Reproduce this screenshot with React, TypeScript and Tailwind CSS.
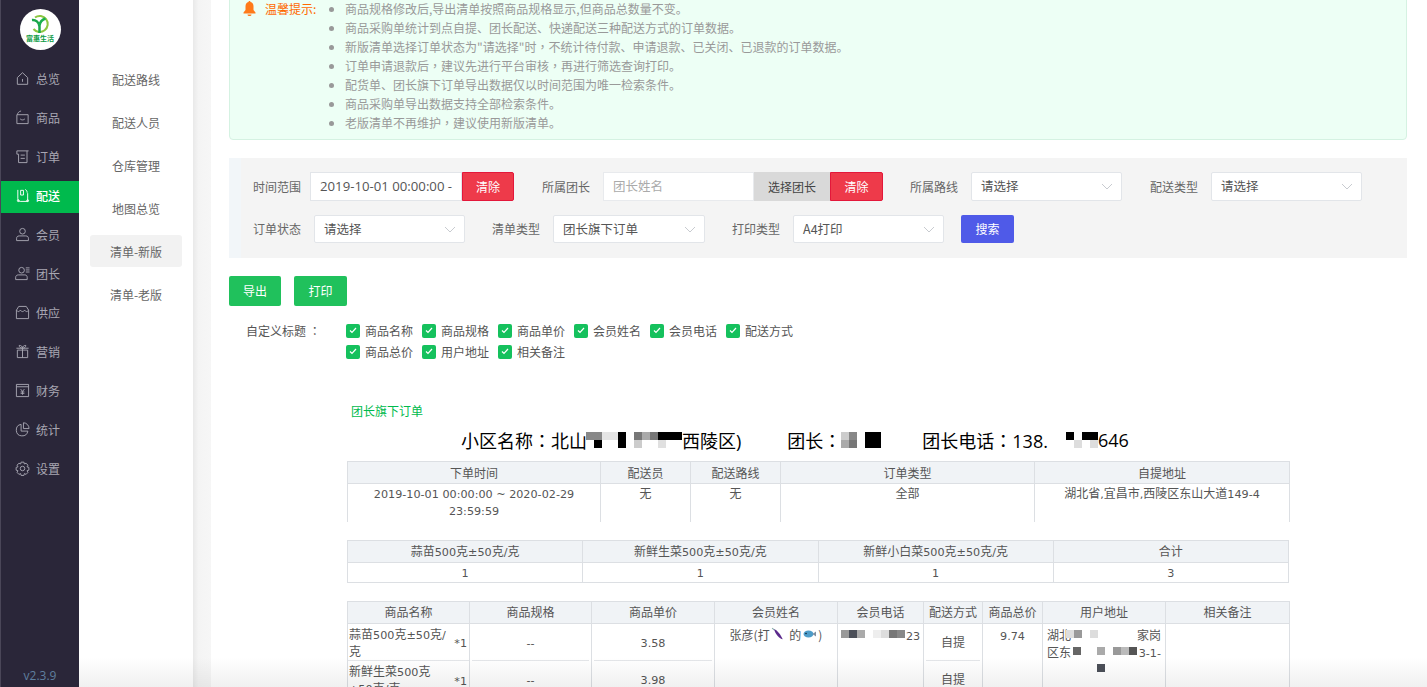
import React from "react";

const FONT = "font-['Noto_Sans_CJK_SC','Open_Sans',sans-serif]";

function NavIcon({ name }: { name: string }) {
  const paths: Record<string, React.ReactNode> = {
    home: (
      <>
        <path d="M2.500 7 8 1.800 13.500 7v7.200h-11z" />
        <path d="M8 8.500v3" />
      </>
    ),
    goods: (
      <>
        <path d="M2 5h12v9.500H2z" />
        <path d="M2.500 5c.3-2 1.800-3.500 4-4" />
        <path d="M5.500 9.500c1.200 1.400 3.800 1.400 5 0" />
      </>
    ),
    order: (
      <>
        <path d="M2 2h12.500M2 2v3.500h1.800V14.500h9V2" />
        <path d="M6 6.500h4.500M6 10h4.500" />
      </>
    ),
    ship: (
      <>
        <path d="M3 2v9.500c0 1.500 1 2.800 2.500 2.800h8V5.500" />
        <path d="M6 2.500h3v5H6zM11 1.500c1.200.8 2 2 2 3.500" />
        <circle cx="3.500" cy="13.500" r="1" />
        <circle cx="13.500" cy="13.500" r="1" />
      </>
    ),
    user: (
      <>
        <circle cx="8" cy="4.500" r="3" />
        <path d="M4.500 9.500h7c2 0 2.800 1.300 2.800 2.500v2.500H1.700V12c0-1.200.8-2.500 2.800-2.500z" />
      </>
    ),
    team: (
      <>
        <circle cx="7" cy="4.500" r="3" />
        <path d="M3.500 9.500h7c1.800 0 2.500 1.300 2.500 2.500v2.500H.7V12c0-1.200 1-2.500 2.800-2.500z" />
        <path d="M11.500 2h4M11.500 4.200h4M11.500 6.400h4" />
      </>
    ),
    store: (
      <>
        <path d="M4 1.500h8l2.500 4v9h-13v-9z" />
        <path d="M1.500 5.500c1.500 2 3 2 4.200 0 1.300 2 3.300 2 4.600 0 1.200 2 2.700 2 4.200 0" />
      </>
    ),
    gift: (
      <>
        <path d="M2.500 6.500h11v8h-11zM1.500 4.500h13M8 4.500v10" />
        <path d="M8 4.500C6 4.500 4.500 3.500 4.500 1.500 6.500 1.500 8 2.500 8 4.500c0-2 1.500-3 3.500-3 0 2-1.500 3-3.500 3z" />
      </>
    ),
    money: (
      <>
        <path d="M1.500 1.500h13v13h-13zM1.500 4h13" />
        <path d="m6 6.500 2 2.500 2-2.500M8 9v3.500M6 9.500h4M6 11h4" />
      </>
    ),
    chart: (
      <>
        <path d="M6.500 2.500a6.200 6.200 0 1 0 7.200 7.200H6.500z" />
        <path d="M9 .8a6.200 6.200 0 0 1 6 6.200H9z" />
      </>
    ),
    gear: (
      <>
        <path d="m6.500 1.200h3l.5 2 1.800-.9 2 2.200-1 1.700 2 .6v3l-2 .6 1 1.700-2 2.200-1.800-.9-.5 2h-3l-.5-2-1.800.9-2-2.200 1-1.700-2-.6v-3l2-.6-1-1.700 2-2.200 1.800.9z" />
        <circle cx="8" cy="8" r="2.400" />
      </>
    ),
  };
  return (
    <svg width="15" height="15" viewBox="0 0 16 16" fill="none" stroke="currentColor" strokeWidth="1" className="shrink-0">
      {paths[name]}
    </svg>
  );
}

function Logo() {
  return (
    <div className="w-[41px] h-[41px] rounded-full bg-white flex flex-col items-center pt-[5px]">
      <svg width="20" height="20" viewBox="0 0 20 20" fill="none">
        <path d="M5 3.500A8 8 0 1 1 3.500 15" stroke="#8cc63f" strokeWidth="2" />
        <path d="M2 6c3.500-.5 7 2 7.500 6.500V19" stroke="#1aa64a" strokeWidth="2.500" />
        <path d="M15.500 4.500c-3 1-5.500 3-6 7" stroke="#19b04f" strokeWidth="2.500" />
      </svg>
      <span className="text-[7px] leading-[8px] font-bold text-[#0c9b45] whitespace-nowrap">富惠生活</span>
    </div>
  );
}

const navItems = [
  ["home", "总览"],
  ["goods", "商品"],
  ["order", "订单"],
  ["ship", "配送"],
  ["user", "会员"],
  ["team", "团长"],
  ["store", "供应"],
  ["gift", "营销"],
  ["money", "财务"],
  ["chart", "统计"],
  ["gear", "设置"],
];

const subItems = ["配送路线", "配送人员", "仓库管理", "地图总览", "清单-新版", "清单-老版"];

const tips = [
  "商品规格修改后,导出清单按照商品规格显示,但商品总数量不变。",
  "商品采购单统计到点自提、团长配送、快递配送三种配送方式的订单数据。",
  "新版清单选择订单状态为\"请选择\"时，不统计待付款、申请退款、已关闭、已退款的订单数据。",
  "订单申请退款后，建议先进行平台审核，再进行筛选查询打印。",
  "配货单、团长旗下订单导出数据仅以时间范围为唯一检索条件。",
  "商品采购单导出数据支持全部检索条件。",
  "老版清单不再维护，建议使用新版清单。",
];

// fullwidth comma and colon sit centred in the picture, as in the TC font
function Punct({ text }: { text: string }) {
  return (
    <>
      {text.split(/([，：])/).map((part, i) =>
        i % 2 ? (
          <span key={i} className="font-['Noto_Sans_CJK_TC']">{part}</span>
        ) : (
          part
        ),
      )}
    </>
  );
}

// latin runs in the tables are a wider face than the CJK around them
function Mix({ text }: { text: string }) {
  return (
    <>
      {text.split(/([0-9A-Za-z±.:~\-\/*,() ]+)/).map((part, i) =>
        i % 2 ? (
          <span key={i} className="font-['DejaVu_Sans'] text-[11.2px] leading-none">{part}</span>
        ) : (
          part
        ),
      )}
    </>
  );
}

function Sidebar() {
  return (
    <aside className="w-[79px] h-full shrink-0 bg-[#2a2639] border-l border-[#4a4658] flex flex-col items-center">
      <div className="pt-[9px] pb-[10px]">
        <Logo />
      </div>
      <nav className="w-full">
        {navItems.map(([icon, label]) => {
          const active = label === "配送";
          return (
            <div key={label} className="h-[39px] flex items-center">
              <div className={`w-full h-8 pb-[2px] flex items-center pl-[14px] gap-[6px] text-xs ${active ? "bg-[#00ba4d] text-white font-medium" : "text-[#a8a6b2]"}`}>
                <NavIcon name={icon} />
                <span>{label}</span>
              </div>
            </div>
          );
        })}
      </nav>
      <div className="mt-auto pb-[3px] text-xs font-['Open_Sans'] text-[#5f7f9f]">v2.3.9</div>
    </aside>
  );
}

function SubNav() {
  return (
    <div className="w-[114px] h-full shrink-0 bg-white pt-[63px] pl-[11px] pr-[11px] flex flex-col gap-[11px]">
      {subItems.map((item) => (
        <div key={item} className={`h-8 pt-[2px] flex items-center justify-center text-xs text-[#666] rounded-[3px] ${item === "清单-新版" ? "bg-[#f2f2f2]" : ""}`}>
          {item}
        </div>
      ))}
    </div>
  );
}

function Chevron() {
  return (
    <svg width="12" height="7" viewBox="0 0 12 7" fill="none" stroke="#c8cbd0" strokeWidth="1">
      <path d="m1 1 5 5 5-5" />
    </svg>
  );
}

function Select({ value, className }: { value: string; className: string }) {
  return (
    <div className={`h-full bg-white border border-[#e2e5e9] rounded-[2px] flex items-center justify-between pl-[9px] pr-[8px] text-[12.5px] text-[#555] ${className}`}>
      <span>{value}</span>
      <Chevron />
    </div>
  );
}

function ClearBtn({ className }: { className: string }) {
  return (
    <div className={`h-full shrink-0 bg-[#ee3a4a] border border-[#e3173a] rounded-r-[2px] flex items-center justify-center text-xs text-white ${className}`}>
      清除
    </div>
  );
}

function Label({ children, className }: { children: string; className: string }) {
  return <span className={`text-xs text-[#666] shrink-0 ${className}`}>{children}</span>;
}

function FilterPanel() {
  return (
    <div className="mt-[18px] h-[100px] bg-[#f2f6f9]">
      <div className="ml-[12px] mt-0 h-full pt-[14px] bg-[#f4f4f4] relative">
        <div className="h-[29px] flex items-center">
          <Label className="ml-[12px]">时间范围</Label>
          <div className="ml-[9px] w-[152px] h-full bg-white border border-[#e2e5e9] flex items-center pl-[9px] text-[13.2px] font-['Open_Sans'] text-[#555] overflow-hidden whitespace-nowrap">
            2019-10-01 00:00:00 -
          </div>
          <ClearBtn className="w-[52px]" />
          <Label className="ml-[28px]">所属团长</Label>
          <div className="ml-[13px] w-[151px] h-full bg-white border border-[#e8eaed] flex items-center pl-[9px] text-[12.5px] text-[#aaa]">团长姓名</div>
          <div className="w-[76px] h-full bg-[#d9d9d9] flex items-center justify-center text-xs text-[#444]">选择团长</div>
          <ClearBtn className="w-[53px]" />
          <Label className="ml-[27px]">所属路线</Label>
          <Select value="请选择" className="ml-[13px] w-[151px]" />
          <Label className="ml-[28px]">配送类型</Label>
          <Select value="请选择" className="ml-[13px] w-[151px]" />
        </div>
        <div className="mt-[14px] h-[28px] flex items-center">
          <Label className="ml-[12px]">订单状态</Label>
          <Select value="请选择" className="ml-[13px] w-[151px]" />
          <Label className="ml-[27px]">清单类型</Label>
          <Select value="团长旗下订单" className="ml-[13px] w-[152px]" />
          <Label className="ml-[27px]">打印类型</Label>
          <Select value="A4打印" className="ml-[13px] w-[151px]" />
          <div className="ml-[17px] w-[53px] h-full bg-[#4f5ae8] rounded-[2px] flex items-center justify-center text-xs text-white">搜索</div>
        </div>
      </div>
    </div>
  );
}

function Check({ label }: { label: string }) {
  return (
    <div className="w-[76px] h-[21px] flex items-center gap-[5px]">
      <span className="w-[14px] h-[14px] rounded-[2px] bg-[#15c15d] flex items-center justify-center shrink-0">
        <svg width="8" height="7" viewBox="0 0 8 7" fill="none" stroke="#fff" strokeWidth="1.200">
          <path d="m1 3.500 2 2 4-4.500" />
        </svg>
      </span>
      <span className="text-xs text-[#555] whitespace-nowrap">{label}</span>
    </div>
  );
}

function Mosaic({ rows, className = "" }: { rows: string[][]; className?: string }) {
  return (
    <span className={`inline-flex flex-col shrink-0 ${className}`}>
      {rows.map((cells, r) => (
        <span key={r} className="flex">
          {cells.map((c, i) => (
            <span key={i} className="w-2 h-2 block" style={{ background: c }} />
          ))}
        </span>
      ))}
    </span>
  );
}

const thCls = "h-[22px] bg-[#f0f3f6] border border-[#dcdfe3] font-normal text-xs text-[#555] p-0 text-center";
const tdCls = "border-x border-b border-[#dcdfe3] text-xs text-[#555] text-center p-0";

function MetaTable() {
  const cols = [253, 90, 90, 254, 255];
  const heads = ["下单时间", "配送员", "配送路线", "订单类型", "自提地址"];
  const row = ["2019-10-01 00:00:00 ~ 2020-02-29 23:59:59", "无", "无", "全部", "湖北省,宜昌市,西陵区东山大道149-4"];
  return (
    <table className="table-fixed border-collapse w-[942px]">
      <colgroup>
        {cols.map((w, i) => (
          <col key={i} style={{ width: w }} />
        ))}
      </colgroup>
      <thead>
        <tr>
          {heads.map((h) => (
            <th key={h} className={thCls}>{h}</th>
          ))}
        </tr>
      </thead>
      <tbody>
        <tr>
          {row.map((c, i) => (
            <td key={i} className="h-[38px] border-x border-[#dcdfe3] text-xs leading-[17px] text-[#555] text-center align-top px-[20px] pt-0">
              <Mix text={c} />
            </td>
          ))}
        </tr>
      </tbody>
    </table>
  );
}

function SumTable() {
  const heads = ["蒜苗500克±50克/克", "新鲜生菜500克±50克/克", "新鲜小白菜500克±50克/克", "合计"];
  const row = ["1", "1", "1", "3"];
  return (
    <table className="table-fixed border-collapse w-[942px] mt-[18px]">
      <thead>
        <tr>
          {heads.map((h) => (
            <th key={h} className={thCls}><Mix text={h} /></th>
          ))}
        </tr>
      </thead>
      <tbody>
        <tr>
          {row.map((c, i) => (
            <td key={i} className={`${tdCls} h-[20px]`}><Mix text={c} /></td>
          ))}
        </tr>
      </tbody>
    </table>
  );
}

function Stack({ items }: { items: string[] }) {
  return (
    <div className="flex flex-col items-stretch">
      {items.map((t, i) => (
        <div key={i} className={`h-[37px] flex items-center justify-center mx-[2px] ${i < items.length - 1 ? "border-b border-[#e4e6e9]" : ""}`}>
          <span><Mix text={t} /></span>
        </div>
      ))}
    </div>
  );
}

function OrderTable() {
  const cols = [122, 122, 123, 123, 86, 59, 60, 123, 124];
  const heads = ["商品名称", "商品规格", "商品单价", "会员姓名", "会员电话", "配送方式", "商品总价", "用户地址", "相关备注"];
  return (
    <table className="table-fixed border-collapse w-[942px] mt-[18px]">
      <colgroup>
        {cols.map((w, i) => (
          <col key={i} style={{ width: w }} />
        ))}
      </colgroup>
      <thead>
        <tr>
          {heads.map((h) => (
            <th key={h} className={thCls}>{h}</th>
          ))}
        </tr>
      </thead>
      <tbody>
        <tr>
          <td className={`${tdCls} align-top text-left`}>
            <div className="h-[37px] flex items-center border-b border-[#e4e6e9] pl-[1px] pr-[2px] leading-[17px]">
              <span className="flex-1"><Mix text="蒜苗500克±50克/克" /></span>
              <span className="shrink-0 ml-[4px]"><Mix text="*1" /></span>
            </div>
            <div className="h-[37px] flex items-center pl-[1px] pr-[2px] leading-[17px]">
              <span className="flex-1"><Mix text="新鲜生菜500克±50克/克" /></span>
              <span className="shrink-0 ml-[4px]"><Mix text="*1" /></span>
            </div>
          </td>
          <td className={`${tdCls} align-top`}><Stack items={["--", "--"]} /></td>
          <td className={`${tdCls} align-top`}><Stack items={["3.58", "3.98"]} /></td>
          <td className={`${tdCls} align-top pt-[2px] leading-[17px]`}>
            <span className="inline-flex items-center justify-center">
              张彦(打
              <svg width="15" height="15" viewBox="0 0 14 14" className="mx-[1px]">
                <path d="M1 1 3.500 3" stroke="#8aa" strokeWidth="1" />
                <path d="M3 2c3 1 6 5 8 9.500C8 10.500 4 7 3 2z" fill="#5c2a8c" />
              </svg>
              &nbsp;的
              <svg width="15" height="12" viewBox="0 0 14 12" className="mx-[1px]">
                <ellipse cx="6" cy="6" rx="5" ry="3.500" fill="#4d9cc9" />
                <path d="m10 6 3.500-2.500v5z" fill="#7d8ea0" />
                <circle cx="3.500" cy="5.500" r=".8" fill="#123" />
              </svg>
              )
            </span>
          </td>
          <td className={`${tdCls} align-top pt-[2px] pl-[3px] leading-[17px]`}>
            <div className="flex items-center whitespace-nowrap">
              <Mosaic rows={[["#999", "#4b4f58", "#aaa", "#fff", "#eee", "#ddd", "#777", "#888"]]} />
              <span className="ml-[1px]"><Mix text="23" /></span>
            </div>
          </td>
          <td className={`${tdCls} align-top`}><Stack items={["自提", "自提"]} /></td>
          <td className={`${tdCls} align-top pt-[2px] leading-[17px]`}><Mix text="9.74" /></td>
          <td className={`${tdCls} align-top text-left pl-[4px] pr-[4px] pt-[2px] leading-[17px]`}>
            <div className="flex items-center">
              <span>湖北</span>
              <Mosaic rows={[["#ddd", "#999", "#fff", "#ddd"]]} className="ml-[-5px]" />
              <span className="ml-auto">家岗</span>
            </div>
            <div className="flex items-center">
              <span>区东</span>
              <Mosaic rows={[["#666", "#fff", "#fff", "#aaa", "#fff", "#999", "#bbb", "#555"]]} className="ml-[2px]" />
              <span className="ml-auto"><Mix text="3-1-" /></span>
            </div>
            <div className="pl-[50px]">
              <span className="block w-2 h-2 mt-[4px] bg-[#4b4f58]" />
            </div>
          </td>
          <td className={tdCls}></td>
        </tr>
      </tbody>
    </table>
  );
}

function Heading() {
  return (
    <div className="mt-[8px] flex items-center h-[26px] text-[18px] leading-[26px] text-black whitespace-nowrap">
      <span className="ml-[232px]"><Punct text="小区名称：北山" /></span>
      <Mosaic
        rows={[
          ["#888", "#888", "#e5e5e5", "#e5e5e5", "#000", "#fff", "#777", "#aaa", "#777", "#000", "#000", "#000"],
          ["#fff", "#000", "#fff", "#fff", "#000", "#fff", "#ccc", "#fff", "#fff", "#e0e0e0", "#fff", "#fff"],
        ]}
        className="ml-[-1px]"
      />
      <span className="font-['Noto_Sans_CJK_SC']">西陵区<span className="font-['Open_Sans']">)</span></span>
      <span className="ml-[46px]"><Punct text="团长：" /></span>
      <Mosaic
        rows={[
          ["#ccc", "#888", "#fff", "#000", "#000"],
          ["#aaa", "#777", "#fff", "#000", "#000"],
        ]}
      />
      <span className="ml-[41px]"><Punct text="团长电话：" /><span className="font-['Open_Sans']">138.</span></span>
      <Mosaic
        rows={[
          ["#fff", "#000", "#fff", "#000", "#000"],
          ["#fff", "#fff", "#ddd", "#fff", "#ddd"],
        ]}
        className="ml-[10px]"
      />
      <span className="font-['Open_Sans']">646</span>
    </div>
  );
}

export default function App() {
  const row1 = ["商品名称", "商品规格", "商品单价", "会员姓名", "会员电话", "配送方式"];
  const row2 = ["商品总价", "用户地址", "相关备注"];
  return (
    <div className={`relative w-[1427px] h-[687px] flex overflow-hidden bg-white ${FONT}`}>
      <Sidebar />
      <SubNav />
      <div className="w-[18px] h-full shrink-0 bg-gradient-to-r from-[#e9e9e9] via-[#f4f4f4] via-30% to-[#f6f6f6]" />
      <main className="flex-1 min-w-0 h-full overflow-hidden px-[18px] pr-[20px]">
        <div className="-mt-[10px] pt-[8px] pb-[7px] h-[150px] bg-[#edfff5] border border-[#d5f2e2] rounded-[4px] flex">
          <div className="w-[101px] shrink-0 pl-[13px] flex gap-[9px] h-[19px] items-center">
            <svg width="13" height="15" viewBox="0 0 13 15" fill="#ff7a1a" className="shrink-0">
              <path d="M6.500 0c.7 0 1 .5 1 1 2 .5 3 2 3 4.200V9L12.500 11.500v1H.5v-1L2.500 9V5.200c0-2.200 1-3.700 3-4.200 0-.5.300-1 1-1z" />
              <path d="M4.500 13.500h4c0 1-.9 1.500-2 1.500s-2-.5-2-1.500z" />
            </svg>
            <span className="text-xs text-[#ff6a00] whitespace-nowrap">温馨提示:</span>
          </div>
          <ul className="list-disc pl-[14px] text-xs leading-[19px] text-[#999] marker:text-[#999]">
            {tips.map((t) => (
              <li key={t}><Punct text={t} /></li>
            ))}
          </ul>
        </div>
        <FilterPanel />
        <div className="mt-[18px] flex gap-[13px]">
          <div className="w-[52px] h-[30px] bg-[#20c15c] rounded-[2px] flex items-center justify-center text-xs text-white">导出</div>
          <div className="w-[53px] h-[30px] bg-[#20c15c] rounded-[2px] flex items-center justify-center text-xs text-white">打印</div>
        </div>
        <div className="mt-[14px] flex">
          <div className="w-[117px] pl-[17px] h-[21px] flex items-center text-xs text-[#555] whitespace-pre"><span>自定义标题 <Punct text="：" /></span></div>
          <div>
            <div className="flex">{row1.map((l) => <Check key={l} label={l} />)}</div>
            <div className="flex">{row2.map((l) => <Check key={l} label={l} />)}</div>
          </div>
        </div>
        <div className="mt-[40px] ml-[122px] text-xs leading-[17px] text-[#00ba4d]">团长旗下订单</div>
        <Heading />
        <div className="ml-[118px] mt-[8px]">
          <MetaTable />
          <SumTable />
          <OrderTable />
        </div>
      </main>
      <div className="absolute left-[79px] right-0 bottom-0 h-[30px] bg-gradient-to-b from-transparent to-[#0000000f] pointer-events-none" />
    </div>
  );
}
